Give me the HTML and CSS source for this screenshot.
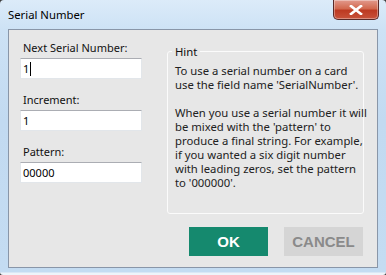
FILE: index.html
```html
<!DOCTYPE html>
<html>
<head>
<meta charset="utf-8">
<link rel="stylesheet" href="styles.css">
</head>
<body>
<div class="window">
  <div class="titlebar">
    <span class="title">Serial Number</span>
    <button class="close" aria-label="Close">
      <svg width="14" height="10" viewBox="0 0 14 10"><path d="M2 1 L12 9 M12 1 L2 9" stroke="#fff" stroke-width="2.6" stroke-linecap="square"/></svg>
    </button>
  </div>
  <div class="client">
    <div class="fields">
      <label class="label">Next Serial Number:</label>
      <div class="input"><span>1</span><span class="caret"></span></div>
      <label class="label">Increment:</label>
      <div class="input"><span>1</span></div>
      <label class="label">Pattern:</label>
      <div class="input"><span>00000</span></div>
    </div>
    <div class="side">
      <fieldset class="hint">
        <legend>Hint</legend>
        <p>To use a serial number on a card<br>use the field name 'SerialNumber'.</p>
        <p>When you use a serial number it will<br>be mixed with the 'pattern' to<br>produce a final string. For example,<br>if you wanted a six digit number<br>with leading zeros, set the pattern<br>to '000000'.</p>
      </fieldset>
      <div class="buttons">
        <button class="btn ok">OK</button>
        <button class="btn cancel">CANCEL</button>
      </div>
    </div>
  </div>
</div>
</body>
</html>
```
FILE: styles.css
```css
* { box-sizing: border-box; }
html, body { margin: 0; padding: 0; }
body {
  width: 386px;
  height: 275px;
  overflow: hidden;
  background: #3a3a3a;
  font-family: "Noto Sans", "Open Sans", sans-serif;
}
.window {
  width: 386px;
  height: 275px;
  background: linear-gradient(to bottom, #dcebf9 0px, #cde2f5 30px, #c2daf1 120px, #c4dcf2 272px, #eef4fa 273px);
  border-radius: 4px 4px 3px 3px;
  display: flex;
  flex-direction: column;
}
.titlebar {
  height: 29px;
  display: flex;
  align-items: flex-start;
  justify-content: space-between;
  padding-left: 8px;
}
.title {
  font-size: 11.3px;
  line-height: 12px;
  margin-top: 9px;
  color: #000;
}
.close {
  width: 46px;
  height: 20px;
  margin-right: 7px;
  padding: 0;
  border: 1px solid #5a2a28;
  border-top: none;
  border-radius: 0 0 5px 5px;
  background: linear-gradient(to bottom, #e29a8d 0%, #d2694f 45%, #bd3a22 55%, #c8523a 100%);
  display: flex;
  align-items: center;
  justify-content: center;
  box-shadow: inset 0 0 0 1px rgba(255,255,255,0.35);
}
.client {
  margin: 0 8px 0 8px;
  height: 239px;
  border: 1px solid #8996a8;
  background: #e7e7e7;
  display: flex;
  padding: 10px 0 0 11px;
}
.fields {
  width: 122px;
  flex: none;
  display: flex;
  flex-direction: column;
}
.label {
  font-size: 11px;
  line-height: 15px;
  padding-left: 3px;
  color: #111;
  margin-bottom: 3px;
}
.input {
  height: 21px;
  background: #fff;
  border: 1px solid #e2e6ea;
  border-top-color: #abadb3;
  font-size: 11px;
  line-height: 19px;
  padding-left: 2px;
  color: #000;
  margin-bottom: 13px;
  display: flex;
  align-items: center;
}
.caret {
  width: 1px;
  height: 14px;
  background: #000;
  margin-left: 1px;
}
.side {
  margin-left: 25px;
  width: 197px;
  flex: none;
  display: flex;
  flex-direction: column;
}
.hint {
  margin: 5px 0 0 0;
  padding: 6px 7px 0 7px;
  border: 1px solid #fbfbfb;
  border-radius: 3px;
  width: 197px;
  min-width: 0;
  height: 169px;
  font-size: 11.3px;
  color: #222;
}
.hint legend {
  padding: 0 3px;
  margin-left: -3px;
  font-size: 11.3px;
  line-height: 13px;
  color: #111;
}
.hint p {
  margin: 0 0 14px 0;
  line-height: 14px;
  white-space: nowrap;
}
.buttons {
  display: flex;
  justify-content: flex-end;
  gap: 16px;
  margin-top: 13px;
  padding-right: 1px;
}
.btn {
  width: 79px;
  height: 29px;
  border: none;
  padding: 0;
  font-family: "Liberation Sans", Arial, sans-serif;
  font-weight: bold;
  font-size: 15px;
}
.ok { background: #15896e; color: #fff; }
.cancel { background: #d5d5d5; color: #8a8a8a; }
```
